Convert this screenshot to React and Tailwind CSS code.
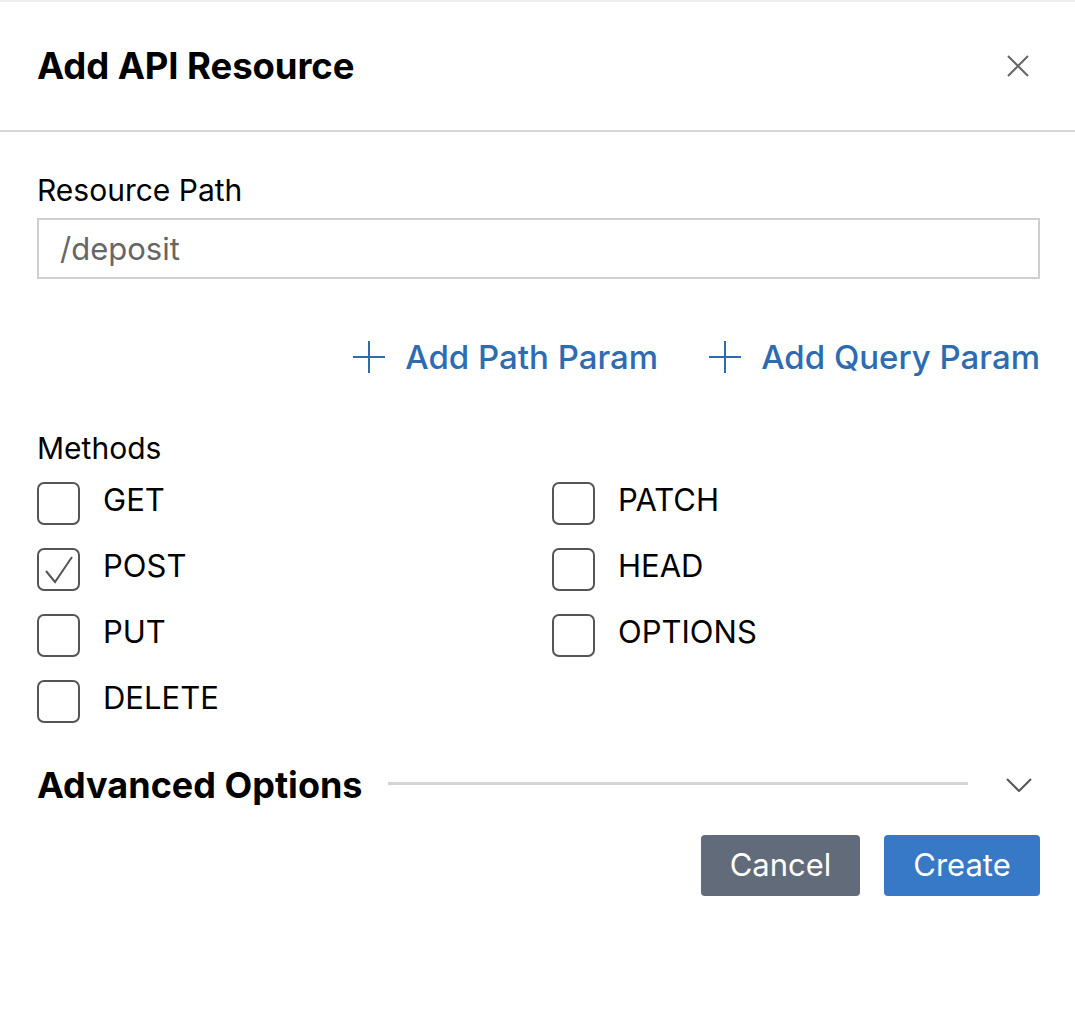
import React, { useState } from 'react';

const METHODS_LEFT = ['GET', 'POST', 'PUT', 'DELETE'];
const METHODS_RIGHT = ['PATCH', 'HEAD', 'OPTIONS'];

const PlusIcon = () => (
  <svg width="32" height="32" viewBox="0 0 32 32" fill="none" stroke="currentColor" strokeWidth="2">
    <path d="M16 0v32M0 16h32" />
  </svg>
);

const MethodCheck = ({ label, checked, onToggle }) => (
  <label className="flex items-center gap-[23px] h-[66px] cursor-pointer select-none">
    <span className="w-[43px] h-[43px] rounded-[7px] border-2 border-[#555] flex items-center justify-center">
      {checked && (
        <svg width="34" height="34" viewBox="0 0 34 34" fill="none" stroke="#555" strokeWidth="2">
          <path d="M4 19l9 11L30 5" />
        </svg>
      )}
    </span>
    <input type="checkbox" className="hidden" checked={checked} onChange={onToggle} />
    <span className="pb-[6px] text-[31px] text-black">{label}</span>
  </label>
);

export default function App() {
  const [selected, setSelected] = useState({ POST: true });
  const toggle = (m) => setSelected((s) => ({ ...s, [m]: !s[m] }));

  return (
    <div className="w-[1075px] h-[1021px] bg-white border-t-2 border-[#eeeeee] font-['Inter',sans-serif] text-black">
      <header className="h-[130px] flex items-center justify-between pl-[37px] pr-[45px] border-b-2 border-[#d6d6d6]">
        <h1 className="text-[36.5px] leading-[44px] font-bold tracking-[-0.1px]">Add API Resource</h1>
        <button className="text-[#666]">
          <svg width="24" height="24" viewBox="0 0 24 24" fill="none" stroke="currentColor" strokeWidth="2">
            <path d="M2 2l20 20M22 2L2 22" />
          </svg>
        </button>
      </header>

      <div className="pl-[37px] pr-[35px] pt-[40px]">
        <label className="block text-[30px] leading-[36px]">Resource Path</label>
        <input
          defaultValue="/deposit"
          className="mt-[10px] w-full h-[61px] border-2 border-[#cfcfcf] px-[21px] text-[31px] text-[#666] outline-none"
        />

        <div className="mt-[55px] flex justify-end gap-[51px] text-[#2d6cb1] font-medium text-[33px] leading-[46px]">
          <button className="flex items-center gap-[20px]">
            <PlusIcon />
            Add Path Param
          </button>
          <button className="flex items-center gap-[20px]">
            <PlusIcon />
            Add Query Param
          </button>
        </div>

        <div className="mt-[50px] text-[30px] leading-[36px]">Methods</div>
        <div className="mt-[4px] grid grid-cols-[515px_1fr]">
          <div>
            {METHODS_LEFT.map((m) => (
              <MethodCheck key={m} label={m} checked={!!selected[m]} onToggle={() => toggle(m)} />
            ))}
          </div>
          <div>
            {METHODS_RIGHT.map((m) => (
              <MethodCheck key={m} label={m} checked={!!selected[m]} onToggle={() => toggle(m)} />
            ))}
          </div>
        </div>

        <div className="mt-[29px] h-[44px] flex items-center">
          <h2 className="text-[36px] leading-[44px] font-bold">Advanced Options</h2>
          <div className="ml-[25px] mb-[4px] flex-1 h-[3px] bg-[#d4d4d4]" />
          <svg className="ml-[38px] mr-[8px]" width="26" height="14" viewBox="0 0 26 14" fill="none" stroke="#555" strokeWidth="2">
            <path d="M1 1l12 12L25 1" />
          </svg>
        </div>

        <div className="mt-[28px] flex justify-end gap-[24px]">
          <button className="w-[159px] h-[61px] rounded-[4px] bg-[#626b79] text-white text-[31px]">Cancel</button>
          <button className="w-[156px] h-[61px] rounded-[4px] bg-[#3778c7] text-white text-[31px]">Create</button>
        </div>
      </div>
    </div>
  );
}
